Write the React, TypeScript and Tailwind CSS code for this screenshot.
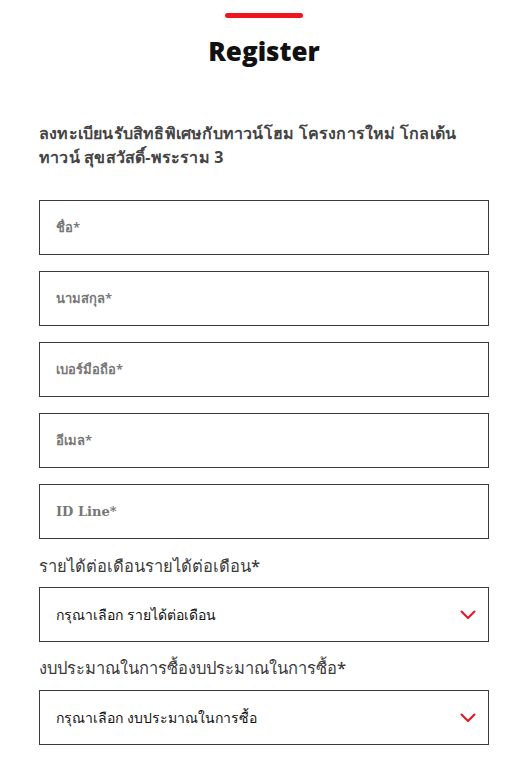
import React from "react";

const Field = ({ placeholder, serif }: { placeholder: string; serif?: boolean }) => (
  <div className="h-[55px] border border-[#3a3a3a] flex items-center pl-[16px]">
    <span
      className="text-[13px] text-[#777] font-semibold"
      style={{ fontFamily: serif ? '"DejaVu Serif", "Liberation Serif", serif' : undefined }}
    >
      {placeholder}
    </span>
  </div>
);

const Chevron = () => (
  <svg width="16" height="10" viewBox="0 0 16 10" fill="none">
    <path d="M1.5 1.5 L8 8 L14.5 1.5" stroke="#e8141c" strokeWidth="2" strokeLinecap="round" strokeLinejoin="round" />
  </svg>
);

const Select = ({ text }: { text: string }) => (
  <div className="h-[55px] border border-[#3a3a3a] flex items-center justify-between pl-[16px] pr-[12px]">
    <span className="text-[14px] text-[#111]">{text}</span>
    <Chevron />
  </div>
);

export default function App() {
  return (
    <div
      className="w-[515px] h-[773px] bg-white overflow-hidden"
      style={{ fontFamily: '"Noto Sans", "Liberation Sans", sans-serif' }}
    >
      <div className="w-[450px] ml-[39px]">
        <div className="flex flex-col items-center pt-[13px]">
          <div className="w-[78px] h-[5px] rounded-full bg-[#f0141e]" />
          <h1
            className="mt-[15px] text-[26px] font-bold text-[#111] leading-[36px]"
            style={{ fontFamily: '"Open Sans", "Noto Sans", sans-serif', fontWeight: 800 }}
          >
            Register
          </h1>
        </div>
        <p className="mt-[52px] text-[16px] font-bold text-[#444] leading-[24px] tracking-[0.2px]">
          ลงทะเบียนรับสิทธิพิเศษกับทาวน์โฮม โครงการใหม่ โกลเด้น ทาวน์ สุขสวัสดิ์-พระราม 3
        </p>
        <div className="mt-[31px] flex flex-col gap-[16px]">
          <Field placeholder="ชื่อ*" />
          <Field placeholder="นามสกุล*" />
          <Field placeholder="เบอร์มือถือ*" />
          <Field placeholder="อีเมล*" />
          <Field placeholder="ID Line*" serif />
        </div>
        <div className="mt-[15px] text-[16.5px] text-[#3a3a3a] font-medium leading-[24px]">
          รายได้ต่อเดือนรายได้ต่อเดือน*
        </div>
        <div className="mt-[9px]">
          <Select text="กรุณาเลือก รายได้ต่อเดือน" />
        </div>
        <div className="mt-[14px] text-[16.5px] text-[#3a3a3a] font-medium leading-[24px]">
          งบประมาณในการซื้องบประมาณในการซื้อ*
        </div>
        <div className="mt-[10px]">
          <Select text="กรุณาเลือก งบประมาณในการซื้อ" />
        </div>
      </div>
    </div>
  );
}
